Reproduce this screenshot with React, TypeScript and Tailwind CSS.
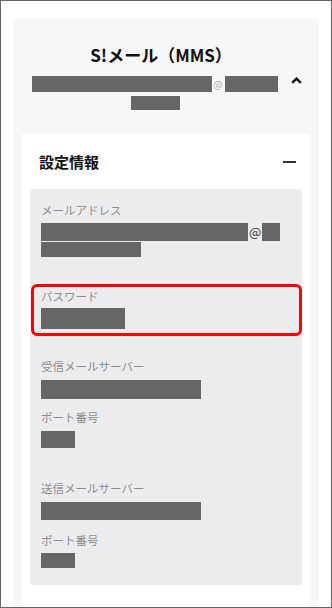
import React from 'react';

const Bar: React.FC<{ w: number; h: number; className?: string }> = ({ w, h, className = '' }) => (
  <div className={`bg-[#666666] ${className}`} style={{ width: w, height: h }} />
);

const Label: React.FC<{ children: React.ReactNode; className?: string }> = ({ children, className = '' }) => (
  <p className={`text-[11.5px] leading-[16px] text-[#8c8c8c] ${className}`}>{children}</p>
);

const App: React.FC = () => {
  return (
    <div
      className="w-[332px] h-[608px] border border-[#666666] bg-white overflow-hidden px-[12px] pt-[18px]"
      style={{ fontFamily: '"Noto Sans CJK JP", "Noto Sans", sans-serif' }}
    >
      <div className="bg-[#f7f7f7] h-full pt-[24px] px-[9px]">
        {/* header */}
        <div className="pr-[10px] text-center">
          <h1 className="text-[17px] leading-[24px] font-bold text-[#111111]">S!メール（MMS）</h1>
        </div>
        <div className="flex items-start mt-[9px]">
          <div className="flex-1 flex flex-col items-center">
            <div className="flex items-center">
              <Bar w={180} h={16} />
              <span className="text-[10px] leading-[16px] text-[#aaaaaa] px-[1px]">@</span>
              <Bar w={53} h={16} className="ml-[1px]" />
            </div>
            <Bar w={49} h={14} className="mt-[4px]" />
          </div>
          <div className="w-[22px] pl-[3px] pt-[1px]">
            <svg width="11" height="7" viewBox="0 0 11 7" fill="none">
              <path d="M1.2 5.8 L5.5 1.6 L9.8 5.8" stroke="#111" strokeWidth="2.4" />
            </svg>
          </div>
        </div>

        {/* card */}
        <div className="mt-[24px] bg-white pb-[60px]">
          <div className="flex items-center justify-between pt-[17px] pl-[17px] pr-[14px]">
            <h2 className="text-[15px] leading-[22px] font-bold text-[#111111]">設定情報</h2>
            <div className="w-[13px] h-[2.5px] bg-[#333333]" />
          </div>

          <div className="mt-[16px] mx-[8px] rounded-[4px] bg-[#ececef] pt-[13px] pb-[17px]">
            <div className="pl-[11px]">
              <Label>メールアドレス</Label>
              <div className="flex items-center mt-[5px]">
                <Bar w={207} h={18} />
                <span className="text-[13px] leading-[18px] text-[#333333] ml-[1px]">@</span>
                <Bar w={18} h={18} className="ml-[1px]" />
              </div>
              <Bar w={100} h={15} className="mt-[1px]" />
            </div>

            <div className="mt-[27px] ml-[1px] border-[3px] border-[#ff0000] rounded-[6px] pl-[7px] pt-[1px] pb-[4px]">
              <Label>パスワード</Label>
              <Bar w={84} h={21} className="mt-[4px]" />
            </div>

            <div className="pl-[11px]">
              <Label className="mt-[22px]">受信メールサーバー</Label>
              <Bar w={160} h={19} className="mt-[6px]" />
              <Label className="mt-[10px]">ポート番号</Label>
              <Bar w={34} h={17} className="mt-[6px]" />
            </div>

            <div className="mt-[18px] ml-[11px] mr-[14px] h-px bg-[#e7e7ea]" />

            <div className="pl-[11px]">
              <Label className="mt-[13px]">送信メールサーバー</Label>
              <Bar w={160} h={18} className="mt-[6px]" />
              <Label className="mt-[12px]">ポート番号</Label>
              <Bar w={34} h={15} className="mt-[5px]" />
            </div>
          </div>
        </div>
      </div>
    </div>
  );
};

export default App;
